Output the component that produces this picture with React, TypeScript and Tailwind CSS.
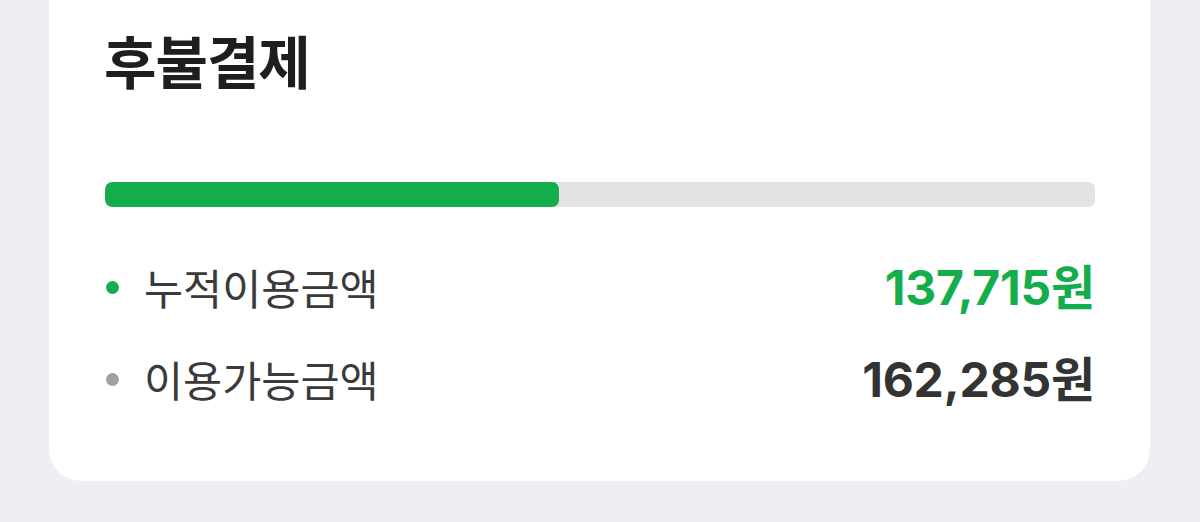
export default function App() {
  const used = 137715;
  const available = 162285;
  const pct = (used / (used + available)) * 100;

  const rows = [
    { label: "누적이용금액", value: "137,715원", dot: "bg-[#13ad4b]", text: "text-[#13ad4b]" },
    { label: "이용가능금액", value: "162,285원", dot: "bg-[#a0a0a0]", text: "text-[#333333]" },
  ];

  return (
    <div
      className="w-[1200px] h-[522px] bg-[#eeeff3] overflow-hidden"
      style={{ fontFamily: '"Noto Sans CJK KR", "Noto Sans", sans-serif' }}
    >
      <div className="ml-[49px] w-[1101px] h-[481px] bg-white rounded-b-[32px] pl-[56px] pr-[55px] pt-[21px]">
        {/* Title */}
        <h2 className="text-[57px] leading-[76px] font-bold text-[#1e1e1e] tracking-[-1px] -ml-[1px]">후불결제</h2>

        {/* Progress */}
        <div className="mt-[85px] h-[25px] w-full rounded-[7px] bg-[#e2e3e5] overflow-hidden">
          <div className="h-full rounded-[7px] bg-[#13ad4b]" style={{ width: `${pct}%` }} />
        </div>

        {/* Rows */}
        <div className="mt-[52px] flex flex-col gap-[36px]">
          {rows.map((r) => (
            <div key={r.label} className="flex items-center justify-between h-[56px]">
              <div className="flex items-center">
                <span className={`w-[13px] h-[13px] rounded-full ml-[1px] ${r.dot}`} />
                <span className="ml-[25px] text-[42.5px] text-[#3a3a3a]">{r.label}</span>
              </div>
              <span
                className={`text-[48px] font-bold tracking-[-0.2px] mt-[2px] ${r.text}`}
                style={{ fontFamily: 'Inter, "Noto Sans CJK KR", sans-serif' }}
              >
                {r.value}
              </span>
            </div>
          ))}
        </div>
      </div>
    </div>
  );
}
